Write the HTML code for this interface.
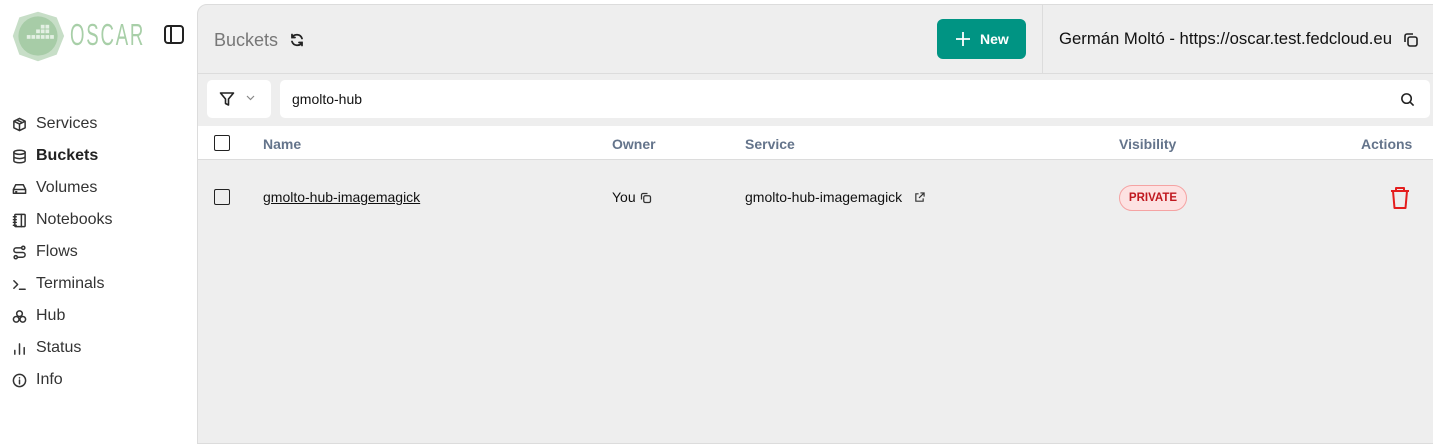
<!DOCTYPE html>
<html><head><meta charset="utf-8"><style>
*{box-sizing:border-box;margin:0;padding:0}
body{width:1433px;height:437px;overflow:hidden;background:#fff;font-family:"Liberation Sans",sans-serif;position:relative;color:#111}
.side{position:absolute;left:0;top:0;width:197px;height:437px;background:#fff}
.nav{position:absolute;left:12px;font-size:16px;color:#333;display:flex;align-items:center}
.nav svg{width:15px;height:15px;margin-right:9px;fill:none;stroke:#333;stroke-width:1.6;stroke-linecap:round;stroke-linejoin:round}
.main{position:absolute;left:197px;top:4px;width:1240px;height:440px;background:#eeeeee;border:1px solid #dcdcdc;border-top-left-radius:10px}
.hdr{position:absolute;left:0;top:0;right:0;height:69px;border-bottom:1px solid #dcdcdc}
.abs{position:absolute}
.th{position:absolute;top:131px;font-size:14px;color:#64748b;font-weight:bold}
.td{position:absolute;top:184px;font-size:14px;color:#111}
.cb{position:absolute;width:16px;height:16px;border:1.5px solid #222;border-radius:2px}
</style></head><body>
<div class="side">
 <svg class="abs" style="left:10px;top:8px" width="56" height="56" viewBox="0 0 60 56">
  <polygon points="30,2 50,8 58,28 50,48 30,55 10,48 3,28 10,8" fill="#b9d6b9" opacity=".8"/>
  <circle cx="30" cy="28" r="21" fill="#9fc79f" opacity=".8"/>
  <g fill="#e4f0e4"><rect x="38" y="16" width="4" height="4"/><rect x="33" y="16" width="4" height="4"/><rect x="28" y="21" width="4" height="4"/><rect x="33" y="21" width="4" height="4"/><rect x="38" y="21" width="4" height="4"/><rect x="18" y="27" width="4" height="4"/><rect x="23" y="27" width="4" height="4"/><rect x="28" y="27" width="4" height="4"/><rect x="33" y="27" width="4" height="4"/><rect x="38" y="27" width="4" height="4"/><rect x="43" y="27" width="4" height="4"/></g>
 </svg>
 <div class="abs" style="left:70px;top:17px;font-size:31px;color:#a8cfa8;letter-spacing:3px;transform:scaleX(.6);transform-origin:left">OSCAR</div>
 <svg class="abs" style="left:164px;top:25px" width="20" height="20" viewBox="0 0 20 20"><rect x="1" y="1" width="18" height="17" rx="3" fill="none" stroke="#222" stroke-width="2"/><line x1="7" y1="1" x2="7" y2="18" stroke="#222" stroke-width="2"/></svg>
 <div class="nav" style="top:115px"><svg viewBox="0 0 16 16"><path d="M8 1.5l6 3v7l-6 3-6-3v-7z M2 4.5l6 3 6-3 M8 7.5v7 M5 3l6 3"/></svg>Services</div>
 <div class="nav" style="top:147px;font-weight:bold;color:#222"><svg viewBox="0 0 16 16"><ellipse cx="8" cy="3.5" rx="6" ry="2.2"/><path d="M2 3.5v9c0 1.2 2.7 2.2 6 2.2s6-1 6-2.2v-9M2 8c0 1.2 2.7 2.2 6 2.2s6-1 6-2.2"/></svg>Buckets</div>
 <div class="nav" style="top:179px"><svg viewBox="0 0 16 16"><path d="M1.5 9l2.5-5h8l2.5 5v4h-13z M1.5 9h13 M4 11.5h1"/></svg>Volumes</div>
 <div class="nav" style="top:211px"><svg viewBox="0 0 16 16"><rect x="3" y="1.5" width="11" height="13" rx="1"/><path d="M10 1.5v13 M1.5 4h3 M1.5 7h3 M1.5 10h3 M1.5 13h3"/></svg>Notebooks</div>
 <div class="nav" style="top:243px"><svg viewBox="0 0 16 16"><circle cx="12" cy="3" r="1.7"/><circle cx="4" cy="13" r="1.7"/><path d="M10 3H4.5a2.5 2.5 0 000 5h7a2.5 2.5 0 010 5H6"/></svg>Flows</div>
 <div class="nav" style="top:275px"><svg viewBox="0 0 16 16"><path d="M2 4l4 4-4 4 M8 13h6"/></svg>Terminals</div>
 <div class="nav" style="top:307px"><svg viewBox="0 0 16 16"><circle cx="8" cy="5" r="3"/><circle cx="4.5" cy="11" r="3"/><circle cx="11.5" cy="11" r="3"/></svg>Hub</div>
 <div class="nav" style="top:339px"><svg viewBox="0 0 16 16"><path d="M3 14v-4 M8 14V3 M13 14V7"/></svg>Status</div>
 <div class="nav" style="top:371px"><svg viewBox="0 0 16 16"><circle cx="8" cy="8" r="6.5"/><path d="M8 7.5v4 M8 5v.2"/></svg>Info</div>
</div>
<div class="main">
 <div class="hdr">
  <div class="abs" style="left:16px;top:25px;font-size:18px;color:#777">Buckets</div>
  <svg class="abs" style="left:91px;top:27px" width="16" height="16" viewBox="0 0 16 16" fill="none" stroke="#222" stroke-width="1.8" stroke-linecap="round"><path d="M13 6.5A5.5 5.5 0 003 5.5 M3 2.5v3h3 M3 9.5a5.5 5.5 0 0010 1 M13 13.5v-3h-3"/></svg>
  <div class="abs" style="left:739px;top:14px;width:89px;height:40px;background:#009483;border-radius:6px;color:#fff;font-weight:bold;font-size:14px;line-height:40px;padding-left:43px">New
   <svg class="abs" style="left:18px;top:12px" width="16" height="16" viewBox="0 0 16 16" stroke="#fff" stroke-width="1.8"><path d="M8 1v14 M1 8h14"/></svg></div>
  <div class="abs" style="left:844px;top:0;height:68px;border-left:1px solid #dcdcdc"></div>
  <div class="abs" style="left:861px;top:24px;font-size:16.7px;color:#111">Germán Moltó - https://oscar.test.fedcloud.eu</div>
  <svg class="abs" style="left:1205px;top:27px" width="16" height="16" viewBox="0 0 16 16" fill="none" stroke="#222" stroke-width="1.6"><rect x="5" y="5" width="9" height="9" rx="2"/><path d="M2 10V4a2 2 0 012-2h6"/></svg>
 </div>
 <div class="abs" style="left:9px;top:75px;width:64px;height:38px;background:#fff;border-radius:5px"></div>
 <svg class="abs" style="left:21px;top:86px" width="16" height="16" viewBox="0 0 16 16" fill="none" stroke="#222" stroke-width="1.6" stroke-linejoin="round"><path d="M1.5 2h13l-5 6v6l-3-1.5V8z"/></svg>
 <svg class="abs" style="left:48px;top:90px" width="9" height="6" viewBox="0 0 9 6" fill="none" stroke="#888" stroke-width="1.2"><path d="M1 1l3.5 3.5L8 1"/></svg>
 <div class="abs" style="left:82px;top:75px;width:1150px;height:38px;background:#fff;border-radius:5px;font-size:14px;line-height:38px;padding-left:12px">gmolto-hub</div>
 <svg class="abs" style="left:1202px;top:87px" width="15" height="15" viewBox="0 0 16 16" fill="none" stroke="#222" stroke-width="1.7"><circle cx="7" cy="7" r="5"/><path d="M11 11l3.5 3.5"/></svg>
 <div class="abs" style="left:0;top:121px;width:1240px;height:34px;background:#fff;border-bottom:1px solid #dcdcdc"></div>
 <div class="cb" style="left:16px;top:130px"></div>
 <div class="th" style="left:65px">Name</div>
 <div class="th" style="left:414px">Owner</div>
 <div class="th" style="left:547px">Service</div>
 <div class="th" style="left:921px">Visibility</div>
 <div class="th" style="left:1163px">Actions</div>
 <div class="cb" style="left:16px;top:184px"></div>
 <div class="td" style="left:65px;text-decoration:underline">gmolto-hub-imagemagick</div>
 <div class="td" style="left:414px">You</div>
 <svg class="abs" style="left:442px;top:187px" width="12" height="12" viewBox="0 0 16 16" fill="none" stroke="#333" stroke-width="1.7"><rect x="5" y="5" width="9" height="9" rx="2"/><path d="M2 10V4a2 2 0 012-2h6"/></svg>
 <div class="td" style="left:547px">gmolto-hub-imagemagick</div>
 <svg class="abs" style="left:716px;top:187px" width="11" height="11" viewBox="0 0 12 12" fill="none" stroke="#333" stroke-width="1.3"><path d="M5 2H2v8h8V7 M7 1h4v4 M11 1L5.5 6.5"/></svg>
 <div class="abs" style="left:921px;top:180px;width:68px;height:26px;border:1px solid #f5a3a3;background:#fde2e2;border-radius:13px;color:#c0181f;font-size:11.5px;font-weight:bold;text-align:center;line-height:24px">PRIVATE</div>
 <svg class="abs" style="left:1191px;top:181px" width="22" height="24" viewBox="0 0 22 24" fill="none" stroke="#e41e1e" stroke-width="2" stroke-linejoin="round"><path d="M2 5h18 M7 5V2h8v3 M4 5l1.5 17h11L18 5"/></svg>
</div>
</body></html>
